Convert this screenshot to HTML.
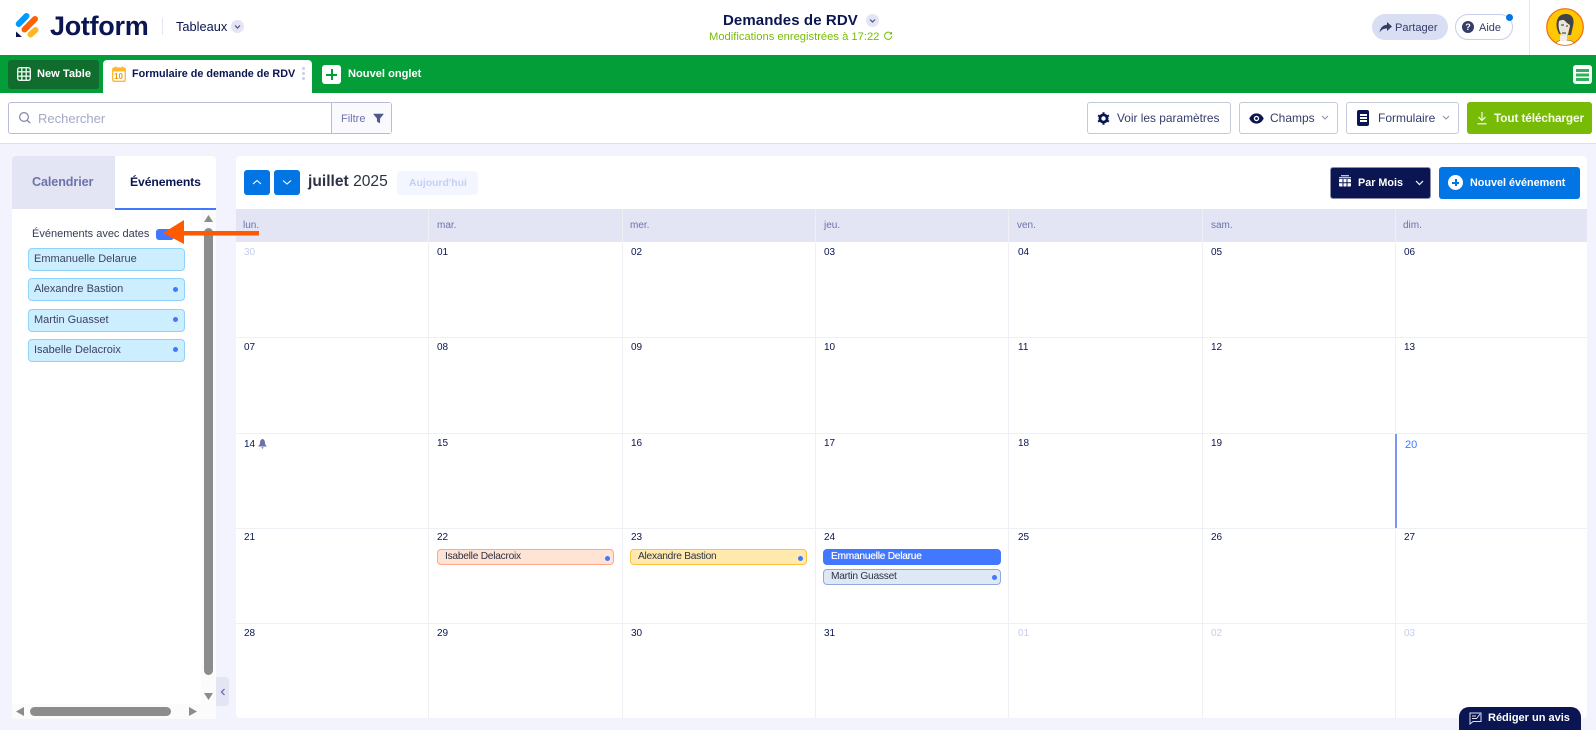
<!DOCTYPE html>
<html lang="fr"><head><meta charset="utf-8"><title>Demandes de RDV</title>
<style>
*{box-sizing:border-box}
html,body{margin:0;padding:0;width:1596px;height:730px;overflow:hidden;background:#f3f3fe;font-family:"Liberation Sans",sans-serif;color:#0a1551}
.a{position:absolute}
.t{position:absolute;white-space:nowrap;line-height:14px}
.btn{position:absolute;background:#fff;border:1px solid #c3cad8;border-radius:3px;top:102px;height:32px}
.wd{position:absolute;top:220px;font-size:10px;line-height:12px;color:#6c73a8}
.d{position:absolute;font-size:10px;line-height:12px;color:#0a1551}
.vl{position:absolute;top:209px;height:509px;width:1px;background:#eef0f6}
.hl{position:absolute;left:236px;width:1351px;height:1px;background:#eef0f6}
.it{position:absolute;left:28px;width:157px;height:23px;background:#cdeeff;border:1px solid #8fd3fb;border-radius:4px;font-size:11px;line-height:20px;padding-left:5px;color:#3d4260}
.dot{position:absolute;width:5px;height:5px;border-radius:50%;background:#4277ff}
.ev{position:absolute;height:16px;width:177px;border:1px solid;border-radius:4px;font-size:10.2px;letter-spacing:-.25px;line-height:14px;padding-left:7px;color:#2c3345}
.chev{position:absolute;width:13px;height:13px;border-radius:50%;background:#e3e5f5}
</style></head><body>

<!-- header -->
<div class="a" style="left:0;top:0;width:1596px;height:55px;background:#fff"></div>
<svg class="a" style="left:15px;top:12px" width="25" height="26" viewBox="0 0 25 26">
<line x1="3.7" y1="12" x2="11.500" y2="4" stroke="#0099ff" stroke-width="6" stroke-linecap="round"/>
<line x1="9.500" y1="17.500" x2="20" y2="7" stroke="#ff6100" stroke-width="6" stroke-linecap="round"/>
<line x1="15.500" y1="22.500" x2="20.500" y2="18" stroke="#ffb629" stroke-width="6" stroke-linecap="round"/>
<path d="M1 19.500 L1 25 L7 25 Z" fill="#0a1551"/></svg>
<div class="t" style="left:50px;top:11px;font-size:27px;line-height:30px;font-weight:700;letter-spacing:-.3px">Jotform</div>
<div class="a" style="left:162px;top:18px;width:1px;height:17px;background:#e3e5f5"></div>
<div class="t" style="left:176px;top:20px;font-size:12.800px">Tableaux</div>
<div class="chev" style="left:231px;top:20px"><svg width="13" height="13"><path d="M4 5.500l2.500 2.500 2.500-2.500" fill="none" stroke="#4a5280" stroke-width="1.200"/></svg></div>

<div class="t" style="left:723px;top:12px;font-size:15px;line-height:18px;font-weight:700;letter-spacing:.1px">Demandes de RDV</div>
<div class="chev" style="left:866px;top:14px"><svg width="13" height="13"><path d="M4 5.500l2.500 2.500 2.500-2.500" fill="none" stroke="#4a5280" stroke-width="1.200"/></svg></div>
<div class="t" style="left:709px;top:30px;font-size:11.200px;color:#78bb07">Modifications enregistrées à 17:22</div>
<svg class="a" style="left:883px;top:31px" width="10" height="10" viewBox="0 0 10 10"><path d="M8 2.500A3.600 3.600 0 1 0 8.800 5M8.600 1v2H6.600" fill="none" stroke="#78bb07" stroke-width="1"/></svg>

<div class="a" style="left:1372px;top:14px;width:76px;height:26px;border-radius:13px;background:#dadef3"></div>
<svg class="a" style="left:1379px;top:22px" width="13" height="11" viewBox="0 0 13 11"><path d="M8 0l5 4.500L8 9V6.500C4.500 6.500 2.500 7.600.5 10.500 1 6.500 3.500 3 8 2.700z" fill="#343c6a"/></svg>
<div class="t" style="left:1395px;top:21px;font-size:11.100px;color:#343c6a">Partager</div>
<div class="a" style="left:1455px;top:14px;width:58px;height:26px;border-radius:13px;background:#fff;border:1px solid #c8ceed"></div>
<div class="a" style="left:1462px;top:21px;width:12px;height:12px;border-radius:50%;background:#343c6a;color:#fff;font-size:9px;font-weight:700;line-height:12px;text-align:center">?</div>
<div class="t" style="left:1479px;top:21px;font-size:11px;color:#343c6a">Aide</div>
<div class="a" style="left:1506px;top:14px;width:7px;height:7px;border-radius:50%;background:#0075e3"></div>
<div class="a" style="left:1529px;top:0;width:1px;height:55px;background:#e3e5f5"></div>
<svg class="a" style="left:1546px;top:8px" width="38" height="38" viewBox="0 0 38 38">
<defs><clipPath id="c"><circle cx="19" cy="19" r="18"/></clipPath></defs>
<circle cx="19" cy="19" r="18.300" fill="#ffc800" stroke="#f26a12" stroke-width="1.200"/>
<g clip-path="url(#c)">
<path d="M9 38c0-4 4-6 10-6s10 2 10 6z" fill="#fff" stroke="#333" stroke-width=".6"/>
<path d="M14 27h7v6h-7z" fill="#f3eee4"/>
<path d="M11 21C9 10 14 6 20 6s9 5 7 12l-2 9h-3l2-9c-3-1-6-3-8-6-2 2-3 5-2 9l1 5h-2z" fill="#444"/>
<path d="M13 13c2-1 3-1 5-1 2 2 4 4 6 5l-2 8c-1 3-5 4-7 1-2-3-3-8-2-13z" fill="#e9e5dc"/>
<path d="M15 17h3M20 18h2M16 25h4" stroke="#333" stroke-width=".9"/>
</g></svg>

<!-- green bar -->
<div class="a" style="left:0;top:55px;width:1596px;height:38px;background:#049e38"></div>
<div class="a" style="left:8px;top:60px;width:91px;height:29px;background:#106d2e;border-radius:3px"></div>
<svg class="a" style="left:17px;top:67px" width="14" height="14" viewBox="0 0 14 14"><rect x=".7" y=".7" width="12.600" height="12.600" rx="2" fill="none" stroke="#e8f5ea" stroke-width="1.400"/><path d="M.5 4.800h13M.5 9.200h13M4.800.5v13M9.200.5v13" stroke="#e8f5ea" stroke-width="1.400"/></svg>
<div class="t" style="left:37px;top:67px;font-size:11.100px;font-weight:700;color:#fff">New Table</div>
<div class="a" style="left:103px;top:60px;width:209px;height:33px;background:#fff;border-radius:4px 4px 0 0"></div>
<svg class="a" style="left:112px;top:66px" width="14" height="16" viewBox="0 0 14 16"><rect x=".7" y="2" width="12.600" height="13.300" rx="1.500" fill="#fff" stroke="#ffb629" stroke-width="1.300"/><rect x=".7" y="2" width="12.600" height="3.500" fill="#ffb629"/><path d="M3.500 .5v3M10.500 .5v3" stroke="#ffb629" stroke-width="1.300"/></svg>
<div class="t" style="left:114px;top:72px;font-size:8px;line-height:9px;font-weight:700;color:#e69a10">10</div>
<div class="t" style="left:132px;top:67px;font-size:10.800px;font-weight:700;color:#0a1551">Formulaire de demande de RDV</div>
<div class="a" style="left:302px;top:67px;width:3px;height:3px;border-radius:50%;background:#c8ceed;box-shadow:0 5px 0 #c8ceed,0 10px 0 #c8ceed"></div>
<div class="a" style="left:322px;top:65px;width:19px;height:19px;border-radius:3px;background:#fff"></div>
<div class="a" style="left:326px;top:73.500px;width:11px;height:2px;background:#049e38"></div>
<div class="a" style="left:330.500px;top:69px;width:2px;height:11px;background:#049e38"></div>
<div class="t" style="left:348px;top:67px;font-size:11.100px;font-weight:700;color:#fff">Nouvel onglet</div>
<div class="a" style="left:1573px;top:65px;width:19px;height:19px;border-radius:3px;background:#fff"></div>
<div class="a" style="left:1576px;top:69px;width:13px;height:2.500px;background:#2fb259;box-shadow:0 4.500px 0 #2fb259,0 9px 0 #2fb259"></div>

<!-- toolbar -->
<div class="a" style="left:0;top:93px;width:1596px;height:51px;background:#fff;border-bottom:1px solid #dcdfe9"></div>
<div class="a" style="left:8px;top:102px;width:384px;height:32px;background:#fff;border:1px solid #b8bdd5;border-radius:3px"></div>
<div class="a" style="left:331px;top:103px;width:60px;height:30px;background:#f9f9fe;border-left:1px solid #b8bdd5"></div>
<svg class="a" style="left:18px;top:111px" width="14" height="14" viewBox="0 0 14 14"><circle cx="6" cy="6" r="4.400" fill="none" stroke="#7d84a8" stroke-width="1.200"/><path d="M9.200 9.200l3 3" stroke="#7d84a8" stroke-width="1.200"/></svg>
<div class="t" style="left:38px;top:112px;font-size:13px;color:#a4a9c4">Rechercher</div>
<div class="t" style="left:341px;top:112px;font-size:11px;color:#6c73a8">Filtre</div>
<svg class="a" style="left:373px;top:113px" width="11" height="11" viewBox="0 0 11 11"><path d="M.5 1h10L6.800 5.500V10L4.200 8.500v-3z" fill="#4d5790" stroke="#4d5790" stroke-width=".5"/></svg>

<div class="btn" style="left:1087px;width:144px"></div>
<svg class="a" style="left:1097px;top:112px" width="13" height="13" viewBox="0 0 13 13"><circle cx="6.500" cy="6.500" r="3.600" fill="none" stroke="#0a1551" stroke-width="2.800"/><path d="M6.500 .3v2M6.500 10.700v2M1.100 3.400l1.700 1M10.200 8.600l1.700 1M1.100 9.600l1.700-1M10.200 4.400l1.700-1" stroke="#0a1551" stroke-width="2"/></svg>
<div class="t" style="left:1117px;top:111px;font-size:11.900px;color:#343c6a">Voir les paramètres</div>
<div class="btn" style="left:1239px;width:99px"></div>
<svg class="a" style="left:1249px;top:113px" width="15" height="11" viewBox="0 0 15 11"><path d="M.3 5.500C2 2 4.500 .4 7.500 .4s5.500 1.600 7.200 5.100c-1.700 3.500-4.200 5.100-7.200 5.100S2 9 .3 5.500z" fill="#0a1551"/><circle cx="7.500" cy="5.500" r="2.700" fill="#fff"/><circle cx="7.500" cy="5.500" r="1.400" fill="#0a1551"/></svg>
<div class="t" style="left:1270px;top:111px;font-size:12px;color:#343c6a">Champs</div>
<svg class="a" style="left:1321px;top:115px" width="8" height="6"><path d="M1 1l3 3 3-3" fill="none" stroke="#8d93ad" stroke-width="1.100"/></svg>
<div class="btn" style="left:1346px;width:113px"></div>
<div class="a" style="left:1357px;top:110px;width:12px;height:16px;background:#0a1551;border-radius:2px"></div>
<div class="a" style="left:1359.500px;top:114px;width:7px;height:1.500px;background:#fff;box-shadow:0 3px 0 #fff,0 6px 0 #fff"></div>
<div class="t" style="left:1378px;top:111px;font-size:12px;color:#343c6a">Formulaire</div>
<svg class="a" style="left:1442px;top:115px" width="8" height="6"><path d="M1 1l3 3 3-3" fill="none" stroke="#8d93ad" stroke-width="1.100"/></svg>
<div class="a" style="left:1467px;top:102px;width:125px;height:32px;background:#78bb07;border-radius:3px"></div>
<svg class="a" style="left:1477px;top:112px" width="10" height="13" viewBox="0 0 10 13"><path d="M5 0v8M1.500 5L5 8.500 8.500 5M.5 11.800h9" fill="none" stroke="#fff" stroke-width="1.100"/></svg>
<div class="t" style="left:1494px;top:111px;font-size:11.800px;font-weight:700;color:#f4fbe6;letter-spacing:-.1px">Tout télécharger</div>

<!-- left panel -->
<div class="a" style="left:12px;top:156px;width:204px;height:563px;background:#fff;border-radius:4px 4px 0 0"></div>
<div class="a" style="left:12px;top:156px;width:103px;height:53px;background:#e3e5f5;border-radius:4px 0 0 0"></div>
<div class="a" style="left:115px;top:208px;width:101px;height:2px;background:#4277ff"></div>
<div class="t" style="left:32px;top:175px;font-size:12.600px;font-weight:700;color:#6c73a8;letter-spacing:-.1px">Calendrier</div>
<div class="t" style="left:130px;top:175px;font-size:12.200px;font-weight:700;color:#0a1551;letter-spacing:-.1px">Événements</div>
<div class="t" style="left:32px;top:227px;font-size:11px;color:#343c54">Événements avec dates</div>
<div class="a" style="left:156px;top:229px;width:18px;height:11px;background:#4277ff;border-radius:3px"></div>
<div class="it" style="top:248px">Emmanuelle Delarue</div>
<div class="it" style="top:278px;line-height:21px">Alexandre Bastion</div><div class="dot" style="left:173px;top:287px"></div>
<div class="it" style="top:309px">Martin Guasset</div><div class="dot" style="left:173px;top:317px"></div>
<div class="it" style="top:339px">Isabelle Delacroix</div><div class="dot" style="left:173px;top:347px"></div>

<div class="a" style="left:201px;top:210px;width:15px;height:509px;background:#fbfbfb"></div>
<div class="a" style="left:12px;top:704px;width:204px;height:15px;background:#fbfbfb"></div>
<div class="a" style="left:204px;top:228px;width:9px;height:447px;background:#8c8c8c;border-radius:4.500px"></div>
<div class="a" style="left:30px;top:707px;width:141px;height:9px;background:#8c8c8c;border-radius:4.500px"></div>
<svg class="a" style="left:204px;top:215px" width="9" height="7"><path d="M4.500 0L9 7H0z" fill="#8c8c8c"/></svg>
<svg class="a" style="left:204px;top:693px" width="9" height="7"><path d="M0 0h9L4.500 7z" fill="#8c8c8c"/></svg>
<svg class="a" style="left:16px;top:707px" width="8" height="9"><path d="M8 0v9L0 4.500z" fill="#8c8c8c"/></svg>
<svg class="a" style="left:189px;top:707px" width="8" height="9"><path d="M0 0v9l8-4.500z" fill="#8c8c8c"/></svg>
<div class="a" style="left:216px;top:677px;width:13px;height:29px;background:#e3e5f5;border-radius:0 4px 4px 0"></div>
<svg class="a" style="left:220px;top:688px" width="6" height="8"><path d="M4.500 1L1.500 4l3 3" fill="none" stroke="#5a65a8" stroke-width="1.200"/></svg>

<!-- calendar -->
<div class="a" style="left:236px;top:156px;width:1351px;height:562px;background:#fff;border-radius:4px"></div>
<div class="a" style="left:244px;top:170px;width:26px;height:25px;background:#0075e3;border-radius:3px"></div>
<svg class="a" style="left:252px;top:179px" width="10" height="7"><path d="M1 5l4-3.500L9 5" fill="none" stroke="#fff" stroke-width="1.100"/></svg>
<div class="a" style="left:274px;top:170px;width:26px;height:25px;background:#0075e3;border-radius:3px"></div>
<svg class="a" style="left:282px;top:179px" width="10" height="7"><path d="M1 1.500L5 5l4-3.500" fill="none" stroke="#fff" stroke-width="1.100"/></svg>
<div class="t" style="left:308px;top:172px;font-size:15.600px;line-height:20px;color:#2c3345"><b>juillet</b> 2025</div>
<div class="a" style="left:397px;top:171px;width:81px;height:24px;background:#f3f6ff;border-radius:4px"></div>
<div class="t" style="left:409px;top:177px;font-size:10.400px;font-weight:700;color:#c2d0f5">Aujourd'hui</div>

<div class="a" style="left:1330px;top:167px;width:101px;height:32px;background:#0a1551;border:1px solid #8a8fae;border-radius:3px"></div>
<svg class="a" style="left:1339px;top:175px" width="12" height="12" viewBox="0 0 12 12"><path d="M0 2.800h12M2 .8h8" stroke="#fff" stroke-width="1"/><rect x="0" y="4" width="12" height="7.500" rx="1" fill="#fff"/><path d="M0 7.700h12M4 4v7.500M8 4v7.500" stroke="#0a1551" stroke-width="1"/></svg>
<div class="t" style="left:1358px;top:176px;font-size:10.800px;font-weight:700;color:#fff">Par Mois</div>
<svg class="a" style="left:1415px;top:180px" width="9" height="6"><path d="M1 1l3.500 3.500L8 1" fill="none" stroke="#fff" stroke-width="1.200"/></svg>
<div class="a" style="left:1439px;top:167px;width:141px;height:32px;background:#0075e3;border-radius:3px"></div>
<div class="a" style="left:1448px;top:175px;width:15px;height:15px;background:#fff;border-radius:50%"></div>
<div class="a" style="left:1452px;top:182px;width:7px;height:1.500px;background:#0075e3"></div>
<div class="a" style="left:1455px;top:179px;width:1.500px;height:7px;background:#0075e3"></div>
<div class="t" style="left:1470px;top:176px;font-size:10.800px;font-weight:700;color:#fff">Nouvel événement</div>

<div class="a" style="left:236px;top:209px;width:1351px;height:33px;background:#e3e5f5"></div>
<div class="wd" style="left:243px">lun.</div><div class="wd" style="left:437px">mar.</div><div class="wd" style="left:630px">mer.</div><div class="wd" style="left:824px">jeu.</div><div class="wd" style="left:1017px">ven.</div><div class="wd" style="left:1211px">sam.</div><div class="wd" style="left:1403px">dim.</div>

<div class="vl" style="left:428px"></div><div class="vl" style="left:622px"></div><div class="vl" style="left:815px"></div><div class="vl" style="left:1008px"></div><div class="vl" style="left:1202px"></div><div class="vl" style="left:1395px"></div>
<div class="hl" style="top:337px"></div><div class="hl" style="top:433px"></div><div class="hl" style="top:528px"></div><div class="hl" style="top:623px"></div>
<div class="a" style="left:1395px;top:434px;width:2px;height:94px;background:#7a97f5"></div>

<div class="d" style="left:244px;top:247px;color:#c5cdec">30</div><div class="d" style="left:437px;top:247px">01</div><div class="d" style="left:631px;top:247px">02</div><div class="d" style="left:824px;top:247px">03</div><div class="d" style="left:1018px;top:247px">04</div><div class="d" style="left:1211px;top:247px">05</div><div class="d" style="left:1404px;top:247px">06</div>
<div class="d" style="left:244px;top:342px">07</div><div class="d" style="left:437px;top:342px">08</div><div class="d" style="left:631px;top:342px">09</div><div class="d" style="left:824px;top:342px">10</div><div class="d" style="left:1018px;top:342px">11</div><div class="d" style="left:1211px;top:342px">12</div><div class="d" style="left:1404px;top:342px">13</div>
<div class="d" style="left:244px;top:439px">14</div><div class="d" style="left:437px;top:438px">15</div><div class="d" style="left:631px;top:438px">16</div><div class="d" style="left:824px;top:438px">17</div><div class="d" style="left:1018px;top:438px">18</div><div class="d" style="left:1211px;top:438px">19</div><div class="d" style="left:1405px;top:439px;font-size:11px;color:#4277ff">20</div>
<svg class="a" style="left:258px;top:439px" width="9" height="10" viewBox="0 0 9 10"><path d="M4.500 0C6.500 .5 7 2 7 4c0 1.500 1 2.500 2 3.500H0C1 6.500 2 5.500 2 4c0-2 .5-3.500 2.500-4z M3.300 8.300h2.400L4.500 10z" fill="#6c73a8"/></svg>
<div class="d" style="left:244px;top:532px">21</div><div class="d" style="left:437px;top:532px">22</div><div class="d" style="left:631px;top:532px">23</div><div class="d" style="left:824px;top:532px">24</div><div class="d" style="left:1018px;top:532px">25</div><div class="d" style="left:1211px;top:532px">26</div><div class="d" style="left:1404px;top:532px">27</div>
<div class="d" style="left:244px;top:628px">28</div><div class="d" style="left:437px;top:628px">29</div><div class="d" style="left:631px;top:628px">30</div><div class="d" style="left:824px;top:628px">31</div><div class="d" style="left:1018px;top:628px;color:#c5cdec">01</div><div class="d" style="left:1211px;top:628px;color:#c5cdec">02</div><div class="d" style="left:1404px;top:628px;color:#c5cdec">03</div>

<div class="ev" style="left:437px;top:549px;background:#ffe3d4;border-color:#ffa58a">Isabelle Delacroix</div><div class="dot" style="left:605px;top:556px"></div>
<div class="ev" style="left:630px;top:549px;background:#ffe9ad;border-color:#ffc240">Alexandre Bastion</div><div class="dot" style="left:798px;top:556px"></div>
<div class="ev" style="left:823px;top:549px;width:178px;background:#4277ff;border-color:#4277ff;color:#fff;text-shadow:0 0 .5px #fff">Emmanuelle Delarue</div>
<div class="ev" style="left:823px;top:569px;width:178px;background:#dfe8f5;border-color:#8fa9de">Martin Guasset</div><div class="dot" style="left:992px;top:575px"></div>

<div class="a" style="left:1459px;top:707px;width:122px;height:23px;background:#0a1551;border-radius:10px 10px 0 0"></div>
<svg class="a" style="left:1469px;top:712px" width="13" height="13" viewBox="0 0 13 13"><path d="M1 1h11v8.500H4L1 12z" fill="none" stroke="#dfe3f3" stroke-width="1"/><path d="M3 4h4M3 6.500h5M8 6l3-4" stroke="#dfe3f3" stroke-width="1"/></svg>
<div class="t" style="left:1488px;top:711px;font-size:11px;font-weight:700;color:#fff">Rédiger un avis</div>

<!-- orange arrow -->
<svg class="a" style="left:160px;top:216px" width="102" height="32" viewBox="0 0 102 32"><path d="M3 17L24 4V15H99V19.500H24V28Z" fill="#ff5a00"/></svg>
</body></html>
